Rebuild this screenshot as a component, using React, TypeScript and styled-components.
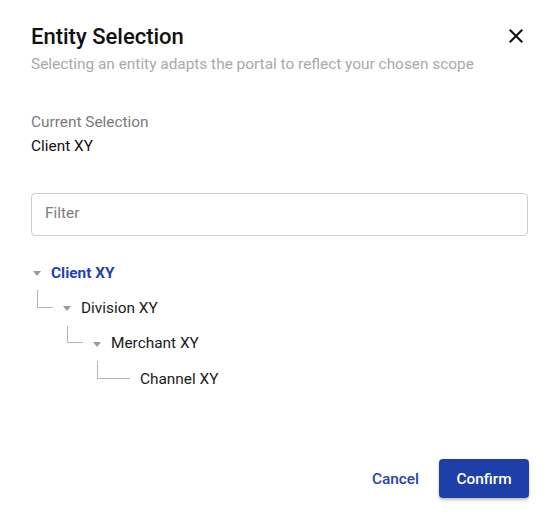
import * as React from "react";
import styled, { createGlobalStyle } from "styled-components";
import { MdClose } from "react-icons/md";

const GlobalStyle = createGlobalStyle`
  html, body {
    margin: 0;
    padding: 0;
    background: #ffffff;
  }
  body {
    font-family: Roboto, "Liberation Sans", Arial, sans-serif;
    color: #1a1a1a;
  }
`;

const Dialog = styled.div`
  box-sizing: border-box;
  width: 549px;
  height: 522px;
  padding: 24px 21px 24px 31px;
  display: flex;
  flex-direction: column;
`;

const Header = styled.div`
  display: flex;
  align-items: flex-start;
  justify-content: space-between;
`;

const Title = styled.h2`
  margin: 0;
  font-size: 22px;
  line-height: 26px;
  font-weight: 500;
  color: #111;
`;

const CloseButton = styled.button`
  border: 0;
  padding: 0;
  margin: 0;
  background: transparent;
  width: 24px;
  height: 24px;
  display: flex;
  align-items: center;
  justify-content: center;
  color: #111;
  cursor: pointer;

  svg {
    width: 24px;
    height: 24px;
  }
`;

const Subtitle = styled.p`
  margin: 3px 0 0;
  font-size: 15.4px;
  line-height: 22px;
  color: #a9a9a9;
`;

const Section = styled.div`
  margin-top: 36px;
`;

const Label = styled.div`
  font-size: 15.4px;
  line-height: 22px;
  color: #7a7a7a;
`;

const Value = styled.div`
  margin-top: 2px;
  font-size: 15.4px;
  line-height: 22px;
  color: #111;
`;

const FilterInput = styled.input`
  box-sizing: border-box;
  display: block;
  margin-top: 36px;
  width: 100%;
  height: 43px;
  padding: 0 13px 4px;
  border: 1px solid #cfcfcf;
  border-radius: 4px;
  font-family: inherit;
  font-size: 15.4px;
  color: #111;
  outline: none;

  &::placeholder {
    color: #7d7d7d;
  }
`;

const Tree = styled.ul`
  list-style: none;
  margin: 19px 0 0;
  padding: 0;
`;

const Row = styled.li<{ $level: number }>`
  position: relative;
  height: 35.3px;
  display: flex;
  align-items: center;
  padding-left: ${(p) => p.$level * 30}px;
`;

/* elbow line from the parent's toggle down to this row */
const Connector = styled.span<{ $level: number; $leaf: boolean }>`
  position: absolute;
  top: 0;
  left: ${(p) => (p.$level - 1) * 30 + 6}px;
  width: ${(p) => (p.$leaf ? 33 : 16)}px;
  height: 50%;
  border-left: 1px solid #b5b5b5;
  border-bottom: 1px solid #b5b5b5;
  box-sizing: border-box;
`;

const Toggle = styled.span`
  width: 20px;
  flex: 0 0 20px;
  display: flex;
  align-items: center;
  padding-left: 2px;
  box-sizing: border-box;
  padding-top: 2px;
`;

const Caret = styled.span`
  width: 0;
  height: 0;
  border-left: 4px solid transparent;
  border-right: 4px solid transparent;
  border-top: 5px solid #9a9a9a;
`;

const NodeLabel = styled.span<{ $selected: boolean; $leaf: boolean }>`
  font-size: 15.4px;
  line-height: 22px;
  margin-left: ${(p) => (p.$leaf ? 19 : 0)}px;
  font-weight: ${(p) => (p.$selected ? 700 : 400)};
  color: ${(p) => (p.$selected ? "#2443b3" : "#1a1a1a")};
`;

const Footer = styled.div`
  margin-top: auto;
  margin-right: -1px;
  display: flex;
  justify-content: flex-end;
  align-items: center;
  gap: 8px;
`;

const TextButton = styled.button`
  border: 0;
  background: transparent;
  padding: 0 12px;
  height: 39px;
  font-family: inherit;
  font-size: 15.4px;
  font-weight: 500;
  color: #2443b3;
  cursor: pointer;
`;

const PrimaryButton = styled.button`
  border: 0;
  border-radius: 4px;
  background: #1e3fa8;
  color: #fff;
  width: 90px;
  height: 39px;
  font-family: inherit;
  font-size: 15.4px;
  font-weight: 500;
  box-shadow: 0 2px 3px rgba(0, 0, 0, 0.25);
  cursor: pointer;
`;

type Node = { name: string; level: number; leaf: boolean };

const nodes: Node[] = [
  { name: "Client XY", level: 0, leaf: false },
  { name: "Division XY", level: 1, leaf: false },
  { name: "Merchant XY", level: 2, leaf: false },
  { name: "Channel XY", level: 3, leaf: true },
];

export default function App() {
  const [selected] = React.useState("Client XY");
  const [filter, setFilter] = React.useState("");

  return (
    <>
      <GlobalStyle />
      <Dialog>
        <Header>
          <Title>Entity Selection</Title>
          <CloseButton aria-label="Close">
            <MdClose />
          </CloseButton>
        </Header>
        <Subtitle>Selecting an entity adapts the portal to reflect your chosen scope</Subtitle>

        <Section>
          <Label>Current Selection</Label>
          <Value>{selected}</Value>
        </Section>

        <FilterInput
          placeholder="Filter"
          value={filter}
          onChange={(e) => setFilter(e.target.value)}
        />

        <Tree>
          {nodes.map((n) => (
            <Row key={n.name} $level={n.level}>
              {n.level > 0 && <Connector $level={n.level} $leaf={n.leaf} />}
              {!n.leaf && (
                <Toggle>
                  <Caret />
                </Toggle>
              )}
              <NodeLabel $selected={n.name === selected} $leaf={n.leaf}>
                {n.name}
              </NodeLabel>
            </Row>
          ))}
        </Tree>

        <Footer>
          <TextButton>Cancel</TextButton>
          <PrimaryButton>Confirm</PrimaryButton>
        </Footer>
      </Dialog>
    </>
  );
}
